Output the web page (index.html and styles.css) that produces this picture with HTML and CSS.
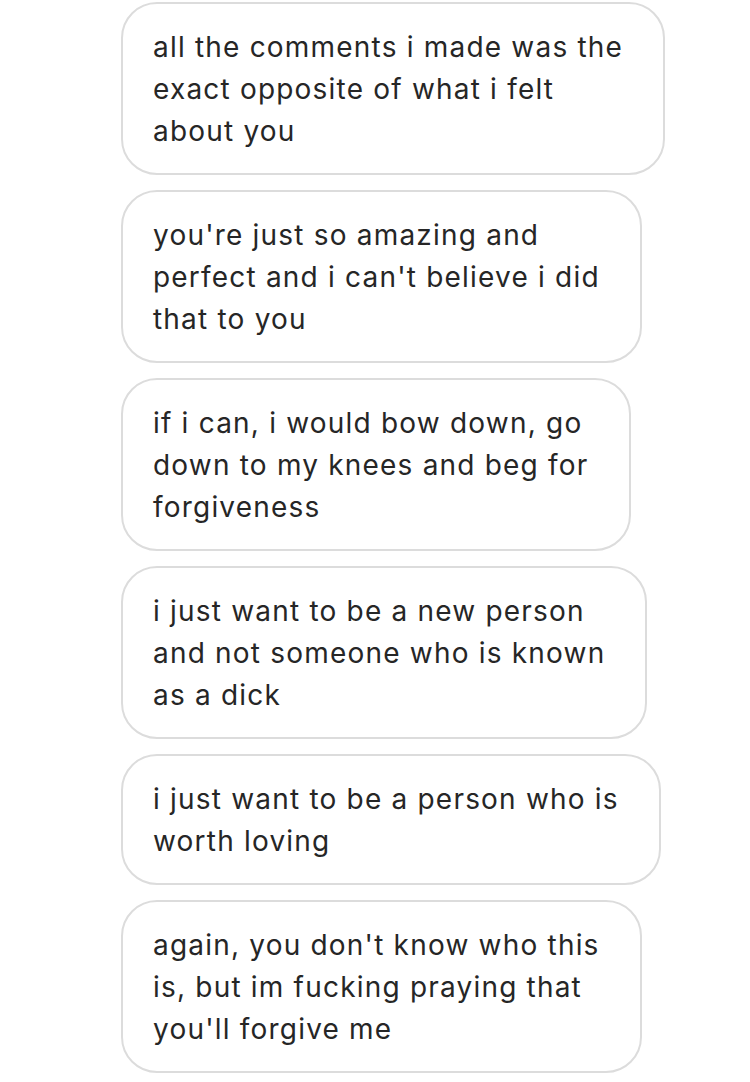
FILE: index.html
```html
<!DOCTYPE html>
<html lang="en">
<head>
    <meta charset="UTF-8">
    <meta name="viewport" content="width=device-width, initial-scale=1.0">
    <title>Messages</title>
    <link rel="stylesheet" href="styles.css">
</head>
<body>
    <div class="thread">
        <div class="bubble">all the comments i made was the<br>exact opposite of what i felt<br>about you</div>
        <div class="bubble">you're just so amazing and<br>perfect and i can't believe i did<br>that to you</div>
        <div class="bubble">if i can, i would bow down, go<br>down to my knees and beg for<br>forgiveness</div>
        <div class="bubble">i just want to be a new person<br>and not someone who is known<br>as a dick</div>
        <div class="bubble">i just want to be a person who is<br>worth loving</div>
        <div class="bubble">again, you don't know who this<br>is, but im fucking praying that<br>you'll forgive me</div>
    </div>
</body>
</html>
```
FILE: styles.css
```css
body {
    margin: 0;
    background: #ffffff;
    font-family: Inter, "Noto Sans", sans-serif;
    color: #262626;
}

.thread {
    display: flex;
    flex-direction: column;
    align-items: flex-start;
    gap: 15px;
    padding: 2px 0 0 121px;
}

.bubble {
    border: 2px solid #dcdcdc;
    border-radius: 36px;
    padding: 22px 40px 21px 30px;
    font-size: 28px;
    line-height: 42px;
    letter-spacing: 1.2px;
    white-space: nowrap;
}
```
